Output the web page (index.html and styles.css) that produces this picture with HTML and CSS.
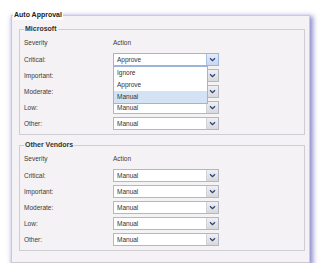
FILE: index.html
```html
<!DOCTYPE html>
<html lang="en">
<head>
    <meta charset="UTF-8">
    <meta name="viewport" content="width=device-width, initial-scale=1.0">
    <title>Auto Approval</title>
    <link rel="stylesheet" href="styles.css">
</head>
<body>

    <!-- Auto Approval panel -->
    <fieldset class="panel">
        <legend class="panel-title">Auto Approval</legend>

        <!-- Microsoft -->
        <fieldset class="group">
            <legend class="group-title">Microsoft</legend>
            <div class="rules">
                <div class="head">Severity</div>
                <div class="head">Action</div>

                <div class="label">Critical:</div>
                <div class="select open">
                    <span class="value">Approve</span>
                    <span class="arrow"><svg width="7" height="5" viewBox="0 0 7 5"><path d="M1 1.2 L3.5 3.6 L6 1.2" fill="none" stroke="#27427a" stroke-width="1.3"/></svg></span>
                    <ul class="menu">
                        <li>Ignore</li>
                        <li>Approve</li>
                        <li class="hover">Manual</li>
                    </ul>
                </div>

                <div class="label">Important:</div>
                <div class="select">
                    <span class="value">Manual</span>
                    <span class="arrow"><svg width="7" height="5" viewBox="0 0 7 5"><path d="M1 1.2 L3.5 3.6 L6 1.2" fill="none" stroke="#27427a" stroke-width="1.3"/></svg></span>
                </div>

                <div class="label">Moderate:</div>
                <div class="select">
                    <span class="value">Manual</span>
                    <span class="arrow"><svg width="7" height="5" viewBox="0 0 7 5"><path d="M1 1.2 L3.5 3.6 L6 1.2" fill="none" stroke="#27427a" stroke-width="1.3"/></svg></span>
                </div>

                <div class="label">Low:</div>
                <div class="select">
                    <span class="value">Manual</span>
                    <span class="arrow"><svg width="7" height="5" viewBox="0 0 7 5"><path d="M1 1.2 L3.5 3.6 L6 1.2" fill="none" stroke="#27427a" stroke-width="1.3"/></svg></span>
                </div>

                <div class="label">Other:</div>
                <div class="select">
                    <span class="value">Manual</span>
                    <span class="arrow"><svg width="7" height="5" viewBox="0 0 7 5"><path d="M1 1.2 L3.5 3.6 L6 1.2" fill="none" stroke="#27427a" stroke-width="1.3"/></svg></span>
                </div>
            </div>
        </fieldset>

        <!-- Other Vendors -->
        <fieldset class="group">
            <legend class="group-title">Other Vendors</legend>
            <div class="rules">
                <div class="head">Severity</div>
                <div class="head">Action</div>

                <div class="label">Critical:</div>
                <div class="select">
                    <span class="value">Manual</span>
                    <span class="arrow"><svg width="7" height="5" viewBox="0 0 7 5"><path d="M1 1.2 L3.5 3.6 L6 1.2" fill="none" stroke="#27427a" stroke-width="1.3"/></svg></span>
                </div>

                <div class="label">Important:</div>
                <div class="select">
                    <span class="value">Manual</span>
                    <span class="arrow"><svg width="7" height="5" viewBox="0 0 7 5"><path d="M1 1.2 L3.5 3.6 L6 1.2" fill="none" stroke="#27427a" stroke-width="1.3"/></svg></span>
                </div>

                <div class="label">Moderate:</div>
                <div class="select">
                    <span class="value">Manual</span>
                    <span class="arrow"><svg width="7" height="5" viewBox="0 0 7 5"><path d="M1 1.2 L3.5 3.6 L6 1.2" fill="none" stroke="#27427a" stroke-width="1.3"/></svg></span>
                </div>

                <div class="label">Low:</div>
                <div class="select">
                    <span class="value">Manual</span>
                    <span class="arrow"><svg width="7" height="5" viewBox="0 0 7 5"><path d="M1 1.2 L3.5 3.6 L6 1.2" fill="none" stroke="#27427a" stroke-width="1.3"/></svg></span>
                </div>

                <div class="label">Other:</div>
                <div class="select">
                    <span class="value">Manual</span>
                    <span class="arrow"><svg width="7" height="5" viewBox="0 0 7 5"><path d="M1 1.2 L3.5 3.6 L6 1.2" fill="none" stroke="#27427a" stroke-width="1.3"/></svg></span>
                </div>
            </div>
        </fieldset>
    </fieldset>

</body>
</html>
```

FILE: styles.css
```css
/* General Styles */
body {
    font-family: 'Liberation Sans', Arial, sans-serif;
    font-size: 6.5px;
    margin: 0;
    padding: 10px 0 0 11px;
    background-color: #ffffff;
    color: #3a3a3a;
}

/* Outer panel */
.panel {
    width: 299px;
    box-sizing: border-box;
    margin: 0;
    padding: 0 4px 11px 7px;
    border: 1px solid #cdc9d2;
    background-color: #f4f2f5;
    box-shadow: 2px 2px 5px 1px rgba(80, 80, 180, 0.65);
}

.panel-title {
    margin-left: -6px;
    padding: 0 1px;
    font-size: 7px;
    font-weight: bold;
    line-height: 10px;
    color: #222;
    background-color: #fff;
}

/* Group boxes */
.group {
    margin: 4px 0 0 0;
    padding: 0 0 4px 0;
    border: 1px solid #cfccd4;
    min-inline-size: 0;
}

.group + .group {
    margin-top: 5px;
}

.group-title {
    margin-left: 4px;
    padding: 0 1px;
    font-size: 7px;
    font-weight: bold;
    line-height: 10px;
    color: #333;
}

.rules {
    display: grid;
    grid-template-columns: 89px 106px;
    row-gap: 3px;
    padding: 4px 0 0 4px;
}

.head {
    line-height: 10px;
    margin-bottom: 2px;
}

.label {
    line-height: 13px;
}

/* Dropdowns */
.select {
    position: relative;
    display: flex;
    height: 13px;
    box-sizing: border-box;
    border: 1px solid #b3b8c0;
    background-color: #fff;
}

.select .value {
    flex: 1;
    padding-left: 3px;
    line-height: 11px;
    color: #333;
}

.select .arrow {
    width: 11px;
    display: flex;
    align-items: center;
    justify-content: center;
    border-left: 1px solid #d2d2d6;
    background: linear-gradient(#f0f0f2, #d9d9dd);
}

.select.open {
    border-color: #9db5d6;
}

.select.open .arrow {
    border-left-color: #a9c0de;
    background: linear-gradient(#e3ecf8, #c7d7ee);
}

.menu {
    position: absolute;
    top: 12px;
    left: -1px;
    width: 95px;
    margin: 0;
    padding: 0;
    list-style: none;
    box-sizing: border-box;
    border: 1px solid #9db5d6;
    background-color: #fff;
    z-index: 2;
}

.menu li {
    height: 12px;
    line-height: 12px;
    padding-left: 3px;
    color: #333;
}

.menu li.hover {
    background-color: #d4e3f3;
}
```
